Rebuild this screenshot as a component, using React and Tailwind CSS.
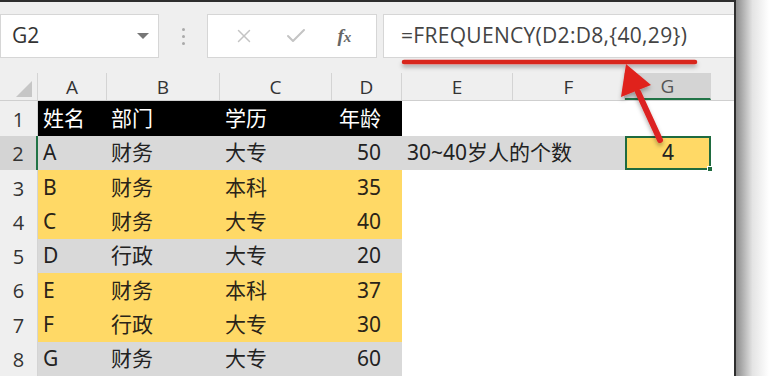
import { X, Check } from 'lucide-react'

const cols = [
  { key: 'A', w: 'w-[69px]' },
  { key: 'B', w: 'w-[113px]' },
  { key: 'C', w: 'w-[112px]' },
  { key: 'D', w: 'w-[70px]' },
  { key: 'E', w: 'w-[111px]' },
  { key: 'F', w: 'w-[112px]' },
  { key: 'G', w: 'w-[86px]' },
]

const rows = [
  { n: 1, name: '姓名', dept: '部门', edu: '学历', age: '年龄', tone: 'head' },
  { n: 2, name: 'A', dept: '财务', edu: '大专', age: '50', tone: 'gray' },
  { n: 3, name: 'B', dept: '财务', edu: '本科', age: '35', tone: 'gold' },
  { n: 4, name: 'C', dept: '财务', edu: '大专', age: '40', tone: 'gold' },
  { n: 5, name: 'D', dept: '行政', edu: '大专', age: '20', tone: 'gray' },
  { n: 6, name: 'E', dept: '财务', edu: '本科', age: '37', tone: 'gold' },
  { n: 7, name: 'F', dept: '行政', edu: '大专', age: '30', tone: 'gold' },
  { n: 8, name: 'G', dept: '财务', edu: '大专', age: '60', tone: 'gray' },
]

const toneClass = {
  head: 'bg-black text-white',
  gray: 'bg-[#d9d9d9] text-[#222]',
  gold: 'bg-[#ffd966] text-[#2a2418]',
}

const uiFont = { fontFamily: '"Open Sans", "Noto Sans", sans-serif' }
const cellFont = { fontFamily: '"Noto Sans", "Noto Sans CJK SC", sans-serif' }

function Toolbar() {
  return (
    <div className="h-[72px] bg-[#efefef] flex items-start pt-[12px]" style={uiFont}>
      {/* name box */}
      <div className="w-[159px] h-[44px] bg-white border border-[#d6d6d6] flex items-center justify-between pl-[11px] pr-[9px]">
        <span className="text-[21px] text-[#333]">G2</span>
        <span className="w-0 h-0 border-l-[6px] border-r-[6px] border-t-[6px] border-l-transparent border-r-transparent border-t-[#777]" />
      </div>
      <div className="w-[48px] h-[44px] flex flex-col items-center justify-center gap-[4px]">
        <span className="w-[3px] h-[3px] rounded-full bg-[#aaa]" />
        <span className="w-[3px] h-[3px] rounded-full bg-[#aaa]" />
        <span className="w-[3px] h-[3px] rounded-full bg-[#aaa]" />
      </div>
      {/* cancel / enter / fx */}
      <div className="w-[170px] h-[44px] bg-white border border-[#d6d6d6] flex items-center justify-around px-[10px]">
        <X size={22} strokeWidth={1.6} className="text-[#c4c4c4]" />
        <Check size={24} strokeWidth={2} className="text-[#c4c4c4]" />
        <span className="text-[19px] italic font-semibold text-[#666]" style={{ fontFamily: '"Liberation Serif", serif' }}>
          f<span className="text-[15px]">x</span>
        </span>
      </div>
      {/* formula bar */}
      <div className="flex-1 ml-[6px] h-[44px] bg-white border-y border-l border-[#d6d6d6] flex items-center pl-[17px]">
        <span className="text-[21px] text-[#444] tracking-[0.3px]">=FREQUENCY(D2:D8,{'{'}40,29{'}'})</span>
      </div>
    </div>
  )
}

function ColumnHeader() {
  return (
    <div className="h-[28px] bg-[#efefef] flex border-b border-[#cfcfcf]" style={uiFont}>
      <div className="w-[38px] flex items-end justify-end pr-[5px] pb-[3px] border-r border-[#d4d4d4]">
        <svg width="16" height="16" viewBox="0 0 16 16"><polygon points="16,0 16,16 0,16" fill="#c6c6c6" /></svg>
      </div>
      {cols.map((c) => (
        <div
          key={c.key}
          className={`${c.w} flex items-center justify-center text-[19px] text-[#333] border-r border-[#d4d4d4] ${
            c.key === 'G' ? 'bg-[#d4d4d4] border-b-2 border-b-[#217346] text-[#555]' : ''
          }`}
        >
          {c.key}
        </div>
      ))}
      <div className="flex-1" />
    </div>
  )
}

function Row({ r }) {
  const tone = toneClass[r.tone]
  const selectedRow = r.n === 2
  return (
    <div className="h-[34.6px] flex">
      <div
        className={`w-[38px] flex items-end justify-center pb-[1px] text-[20px] text-[#333] border-r ${
          selectedRow ? 'bg-[#d4d4d4] border-r-2 border-r-[#217346]' : 'bg-[#efefef] border-[#d4d4d4]'
        }`}
        style={uiFont}
      >
        {r.n}
      </div>
      <div className={`flex text-[21px] ${tone}`} style={cellFont}>
        <div className="w-[69px] flex items-center pl-[5px]">{r.name}</div>
        <div className="w-[113px] flex items-center pl-[4px]">{r.dept}</div>
        <div className="w-[112px] flex items-center pl-[5px]">{r.edu}</div>
        <div className="w-[70px] flex items-center justify-end pr-[21px]">{r.age}</div>
      </div>
      {selectedRow ? (
        <div className="flex text-[21px] text-[#222]" style={cellFont}>
          <div className="w-[223px] bg-[#d9d9d9] flex items-center pl-[5px]">30~40岁人的个数</div>
          <div className="w-[86px] relative bg-[#ffd966] border-2 border-[#1f6b3f] flex items-center justify-center">
            4
            <span className="absolute -right-[4px] -bottom-[4px] w-[6px] h-[6px] bg-[#1f6b3f] border border-white" />
          </div>
        </div>
      ) : (
        <div className="flex-1 bg-white" />
      )}
    </div>
  )
}

function Annotations() {
  return (
    <svg className="absolute inset-0 pointer-events-none" width="736" height="376">
      <defs>
        <filter id="sh" x="-20%" y="-50%" width="140%" height="300%">
          <feDropShadow dx="0" dy="3" stdDeviation="2" floodColor="#000" floodOpacity="0.3" />
        </filter>
      </defs>
      <g filter="url(#sh)">
        <line x1="404" y1="60" x2="695" y2="60" stroke="#d8261d" strokeWidth="4.5" strokeLinecap="round" />
        <line x1="660" y1="138" x2="638" y2="90" stroke="#dc2320" strokeWidth="6" strokeLinecap="round" />
        <polygon points="626,62 621,95 651,83" fill="#e0211e" />
      </g>
    </svg>
  )
}

export default function App() {
  return (
    <div className="w-[769px] h-[376px] bg-white flex overflow-hidden">
      <div className="relative w-[736px] h-[376px] border-t-2 border-r-2 border-[#2e2e2e] bg-white flex flex-col overflow-hidden">
        <Toolbar />
        <ColumnHeader />
        {rows.map((r) => (
          <Row key={r.n} r={r} />
        ))}
        <Annotations />
      </div>
      <div className="flex-1 bg-gradient-to-r from-[#8d8d8d] via-[#e4e4e4] to-white" />
    </div>
  )
}
